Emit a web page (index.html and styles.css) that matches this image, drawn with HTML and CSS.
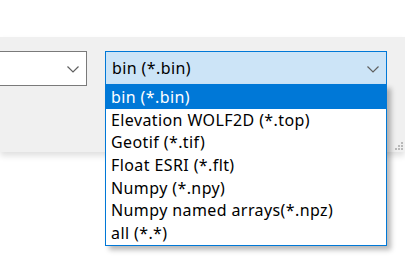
FILE: index.html
```html
<!DOCTYPE html>
<html lang="en">
<head>
  <meta charset="UTF-8" />
  <title>File type</title>
  <link rel="stylesheet" href="styles.css">
</head>
<body>
  <div class="top-band"></div>

  <!-- Dialog panel with the two combo boxes -->
  <div class="panel">
    <div class="combo combo-left">
      <span class="combo-text"></span>
      <svg class="chevron" width="12" height="7" viewBox="0 0 12 7"><path d="M0.5 0.5 L6 6 L11.5 0.5" fill="none" stroke="#606060" stroke-width="1.2"/></svg>
    </div>

    <div class="combo combo-right">
      <span class="combo-text">bin (*.bin)</span>
      <svg class="chevron" width="12" height="7" viewBox="0 0 12 7"><path d="M0.5 0.5 L6 6 L11.5 0.5" fill="none" stroke="#606060" stroke-width="1.2"/></svg>
    </div>

    <div class="grip">
      <i style="left:6px;top:0"></i>
      <i style="left:3px;top:3px"></i><i style="left:6px;top:3px"></i>
      <i style="left:0;top:6px"></i><i style="left:3px;top:6px"></i><i style="left:6px;top:6px"></i>
    </div>
  </div>

  <!-- Open list of the right combo box -->
  <ul class="dropdown">
    <li class="selected">bin (*.bin)</li>
    <li>Elevation WOLF2D (*.top)</li>
    <li>Geotif (*.tif)</li>
    <li>Float ESRI (*.flt)</li>
    <li>Numpy (*.npy)</li>
    <li>Numpy named arrays(*.npz)</li>
    <li>all (*.*)</li>
  </ul>
</body>
</html>
```

FILE: styles.css
```css
* {
  margin: 0;
  padding: 0;
  box-sizing: border-box;
}
html,
body {
  height: 100%;
}
body {
  position: relative;
  background: #ffffff;
  font-family: "Noto Sans", "Open Sans", sans-serif;
  font-size: 16px;
  letter-spacing: 0.4px;
  color: #000;
}
.top-band {
  height: 37px;
  background: #ffffff;
}
.panel {
  position: relative;
  height: 115px;
  background: #f0f0f0;
  padding-top: 14px;
  display: flex;
  align-items: flex-start;
  gap: 18px;
  box-shadow: 0 4px 6px rgba(0, 0, 0, 0.12);
}
.combo {
  position: relative;
  height: 35px;
  display: flex;
  align-items: center;
  justify-content: space-between;
  padding: 0 7px 0 6px;
}
.combo-left {
  width: 88px;
  margin-left: -1px;
  background: #ffffff;
  border: 1px solid #7a7a7a;
}
.combo-right {
  width: 282px;
  height: 34px;
  background: #cce4f7;
  border: 1px solid #0078d7;
}
.combo-text {
  line-height: 20px;
}
.chevron {
  margin-top: 2px;
}
.dropdown {
  position: absolute;
  left: 105px;
  top: 84px;
  width: 282px;
  height: 162px;
  padding-top: 1px;
  list-style: none;
  background: #ffffff;
  border: 1px solid #0078d7;
  box-shadow: 4px 4px 5px rgba(0, 0, 0, 0.28);
  z-index: 2;
}
.dropdown li {
  height: 22.7px;
  line-height: 22.7px;
  padding-left: 5px;
  white-space: nowrap;
}
.dropdown li.selected {
  margin-top: -1px;
  height: 23.7px;
  padding-top: 1px;
  background: #0078d7;
  color: #ffffff;
}
.grip {
  position: absolute;
  right: 2px;
  bottom: 2px;
  width: 8px;
  height: 8px;
}
.grip i {
  position: absolute;
  width: 2px;
  height: 2px;
  background: #b9b9b9;
}
```
